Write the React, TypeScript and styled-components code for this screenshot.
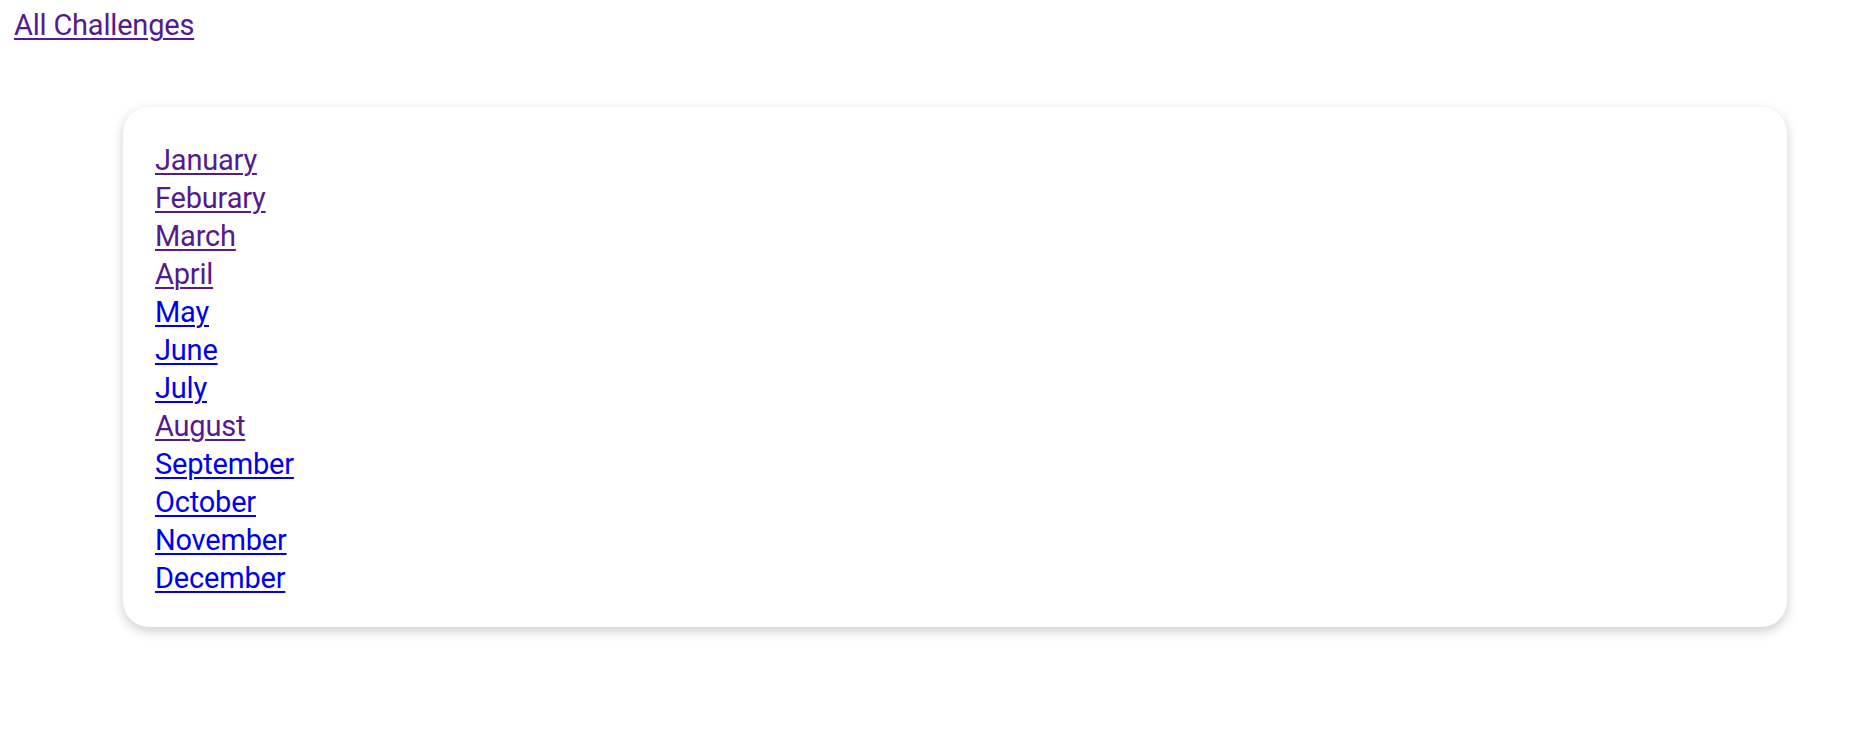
import styled, { createGlobalStyle } from "styled-components";

const GlobalStyle = createGlobalStyle`
  body {
    margin: 0;
    background: #ffffff;
    font-family: Roboto, "Liberation Sans", sans-serif;
  }
`;

const Page = styled.div`
  padding: 8px 0 40px 14px;
`;

const Link = styled.a<{ $visited?: boolean }>`
  display: inline-block;
  font-size: 29px;
  line-height: 38px;
  letter-spacing: -0.2px;
  color: ${(p) => (p.$visited ? "#551a8b" : "#0000ee")};
  text-decoration: underline;
  text-decoration-thickness: 2px;
  text-underline-offset: 3px;
`;

const BackLink = styled(Link)`
  line-height: normal;
`;

const Card = styled.div`
  margin: 65px 0 0 109px;
  width: 1664px;
  box-sizing: border-box;
  padding: 34px 32px 30px;
  background: #ffffff;
  border-radius: 26px;
  box-shadow: 0 4px 12px rgba(0, 0, 0, 0.2);
`;

const MonthList = styled.div`
  display: flex;
  flex-direction: column;
  align-items: flex-start;
`;

const months = [
  { name: "January", visited: true },
  { name: "Feburary", visited: true },
  { name: "March", visited: true },
  { name: "April", visited: true },
  { name: "May", visited: false },
  { name: "June", visited: false },
  { name: "July", visited: false },
  { name: "August", visited: true },
  { name: "September", visited: false },
  { name: "October", visited: false },
  { name: "November", visited: false },
  { name: "December", visited: false },
];

const App = () => {
  return (
    <>
      <GlobalStyle />
      <Page>
        <BackLink href="#" $visited>
          All Challenges
        </BackLink>
        <Card>
          <MonthList>
            {months.map((m) => (
              <Link key={m.name} href="#" $visited={m.visited}>
                {m.name}
              </Link>
            ))}
          </MonthList>
        </Card>
      </Page>
    </>
  );
};

export default App;
